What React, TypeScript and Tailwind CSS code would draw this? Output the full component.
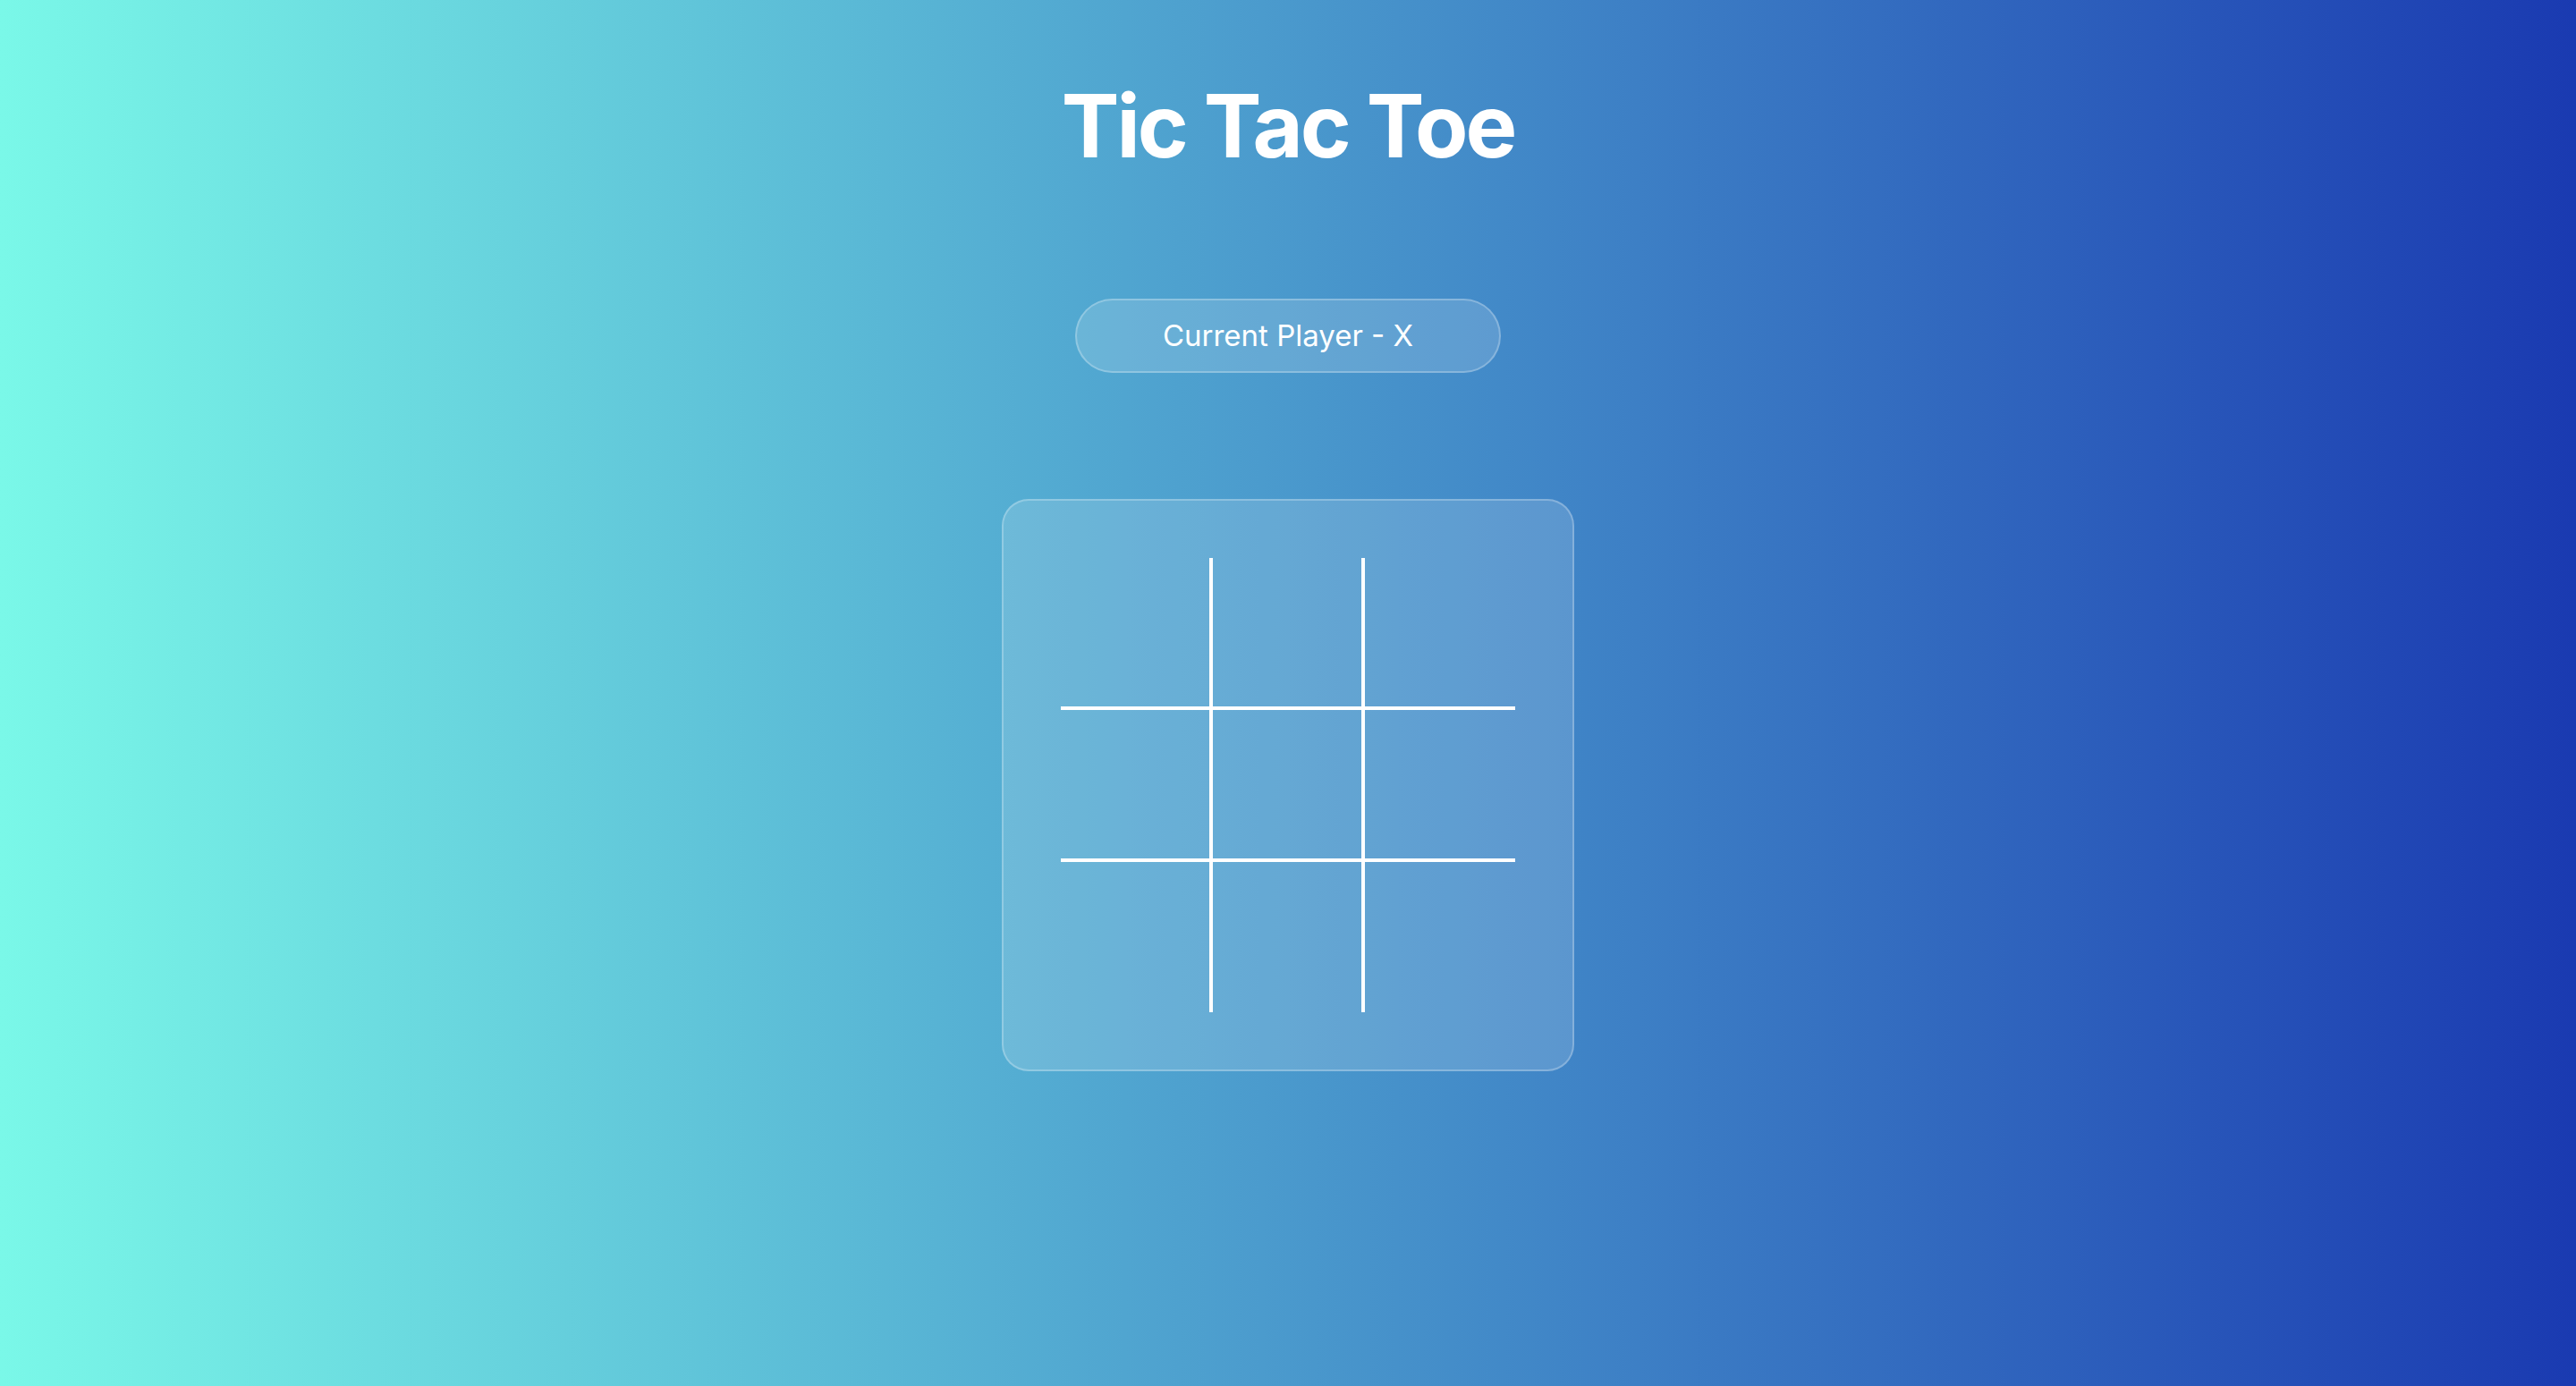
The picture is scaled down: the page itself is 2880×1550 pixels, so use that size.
const cells = Array.from({ length: 9 }, (_, i) => i);

function Cell({ index }: { index: number }) {
  const col = index % 3;
  const row = Math.floor(index / 3);
  return (
    <div
      className={[
        "flex items-center justify-center",
        col < 2 ? "border-r-4 border-white" : "",
        row < 2 ? "border-b-4 border-white" : "",
      ].join(" ")}
    />
  );
}

export default function App() {
  return (
    <div
      className="min-h-screen w-full bg-[linear-gradient(to_right,#7af8e8,#1a3ab1)] flex flex-col items-center text-white"
      style={{ fontFamily: "Inter, 'Noto Sans', sans-serif" }}
    >
      <h1 className="mt-[86px] text-[97px] leading-[110px] font-bold tracking-[-3px]">Tic Tac Toe</h1>

      <div className="mt-[138px] w-[476px] h-[83px] rounded-full bg-white/15 border-2 border-white/25 flex items-center justify-center">
        <span className="text-[33px] font-normal">Current Player - X</span>
      </div>

      <div className="mt-[141px] w-[640px] h-[640px] rounded-[30px] bg-white/15 border-2 border-white/25 flex items-center justify-center">
        <div className="grid grid-cols-[170px_170px_168px] grid-rows-[170px_170px_168px] w-[508px] h-[508px]">
          {cells.map((i) => (
            <Cell key={i} index={i} />
          ))}
        </div>
      </div>
    </div>
  );
}
